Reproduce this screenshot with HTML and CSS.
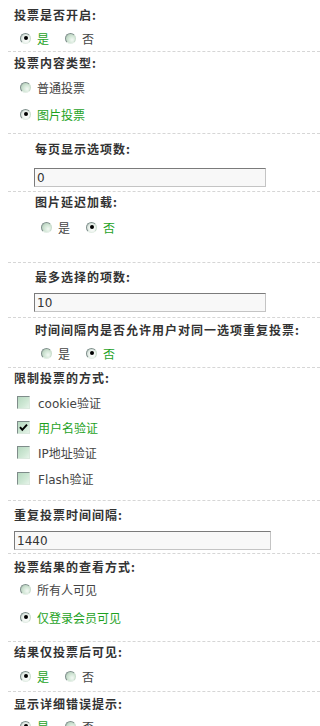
FILE: index.html
```html
<!DOCTYPE html>
<html lang="zh-CN">
<head>
<meta charset="utf-8">
<title>投票设置</title>
<link rel="stylesheet" href="styles.css">
</head>
<body>
<div class="form">

  <section class="sec s1">
    <div class="title">投票是否开启:</div>
    <div class="row inline g1">
      <label class="opt on"><span class="radio checked"></span>是</label>
      <label class="opt"><span class="radio"></span>否</label>
    </div>
  </section>

  <section class="sec s2">
    <div class="title">投票内容类型:</div>
    <div class="row g2"><label class="opt"><span class="radio"></span>普通投票</label></div>
    <div class="row g3"><label class="opt on"><span class="radio checked"></span>图片投票</label></div>
  </section>

  <section class="sec sub s3">
    <div class="title">每页显示选项数:</div>
    <input class="field short g9" type="text" value="0">
  </section>

  <section class="sec sub s4">
    <div class="title">图片延迟加载:</div>
    <div class="row inline g3">
      <label class="opt"><span class="radio"></span>是</label>
      <label class="opt on"><span class="radio checked"></span>否</label>
    </div>
  </section>

  <section class="sec sub s5">
    <div class="title">最多选择的项数:</div>
    <input class="field short g6" type="text" value="10">
  </section>

  <section class="sec sub s6">
    <div class="title">时间间隔内是否允许用户对同一选项重复投票:</div>
    <div class="row inline g1">
      <label class="opt"><span class="radio"></span>是</label>
      <label class="opt on"><span class="radio checked"></span>否</label>
    </div>
  </section>

  <section class="sec s7">
    <div class="title">限制投票的方式:</div>
    <div class="row g2"><label class="opt chk"><span class="cb"></span>cookie验证</label></div>
    <div class="row g1"><label class="opt chk on"><span class="cb"><svg class="tick" viewBox="0 0 11 11" width="11" height="11"><path d="M2 5.2 L4.3 7.8 L9 2.6" fill="none" stroke="#000" stroke-width="2"/></svg></span>用户名验证</label></div>
    <div class="row g1"><label class="opt chk"><span class="cb"></span>IP地址验证</label></div>
    <div class="row g2"><label class="opt chk"><span class="cb"></span>Flash验证</label></div>
  </section>

  <section class="sec s8">
    <div class="title">重复投票时间间隔:</div>
    <input class="field long g6" type="text" value="1440">
  </section>

  <section class="sec s9">
    <div class="title">投票结果的查看方式:</div>
    <div class="row"><label class="opt"><span class="radio"></span>所有人可见</label></div>
    <div class="row g4"><label class="opt on"><span class="radio checked"></span>仅登录会员可见</label></div>
  </section>

  <section class="sec s10">
    <div class="title">结果仅投票后可见:</div>
    <div class="row inline g2">
      <label class="opt on"><span class="radio checked"></span>是</label>
      <label class="opt"><span class="radio"></span>否</label>
    </div>
  </section>

  <section class="sec s11">
    <div class="title">显示详细错误提示:</div>
    <div class="row inline">
      <label class="opt on"><span class="radio checked"></span>是</label>
      <label class="opt"><span class="radio"></span>否</label>
    </div>
  </section>

</div>
</body>
</html>
```

FILE: styles.css
```css
html, body {
  margin: 0;
  padding: 0;
  background: #ffffff;
}

body {
  font-family: "DejaVu Sans", "Noto Sans CJK SC", sans-serif;
  font-size: 12px;
  color: #444444;
  overflow: hidden;
}

.form {
  margin-left: 8px;
  display: flex;
  flex-direction: column;
}

.sec {
  display: flex;
  flex-direction: column;
  align-items: flex-start;
  padding-left: 6px;
  border-top: 1px dashed #d6d6d6;
}

.sec.s1 { border-top: none; padding-top: 5px; padding-bottom: 1px; }
.sec.s2 { padding-top: 1px; padding-bottom: 7px; }
.sec.s3 { padding-top: 5px; padding-bottom: 4px; }
.sec.s4 { padding-top: 0; padding-bottom: 23px; }
.sec.s5 { padding-top: 4px; padding-bottom: 5px; }
.sec.s6 { padding-top: 2px; padding-bottom: 2px; }
.sec.s7 { padding-top: 0; padding-bottom: 10px; }
.sec.s8 { padding-top: 4px; padding-bottom: 3px; }
.sec.s9 { padding-top: 3px; padding-bottom: 12px; }
.sec.s10 { padding-top: 0; padding-bottom: 3px; }
.sec.s11 { padding-top: 2px; padding-bottom: 0; }

.sec.sub { padding-left: 27px; }

.title {
  height: 20px;
  line-height: 20px;
  font-family: "Noto Sans CJK SC", "DejaVu Sans", sans-serif;
  font-weight: bold;
  letter-spacing: 1px;
  color: #333333;
  white-space: nowrap;
}

.g1 { margin-top: 1px; }
.g2 { margin-top: 2px; }
.g3 { margin-top: 3px; }
.g4 { margin-top: 4px; }
.g6 { margin-top: 6px; }
.g9 { margin-top: 9px; }

.row {
  height: 24px;
  display: flex;
  align-items: center;
  padding-left: 6px;
}

.sub .row { padding-left: 6px; }

.opt {
  display: flex;
  align-items: center;
  height: 24px;
  color: #444444;
  white-space: nowrap;
}

.inline .opt { margin-right: 16px; }

.opt.on { color: #1ea21e; }

.radio {
  position: relative;
  width: 11px;
  height: 11px;
  box-sizing: border-box;
  border-radius: 50%;
  margin-right: 6px;
  flex: none;
  border: 1px solid;
  border-color: #7f8f8c #c9dccd #e4eee6 #7f8f8c;
  background: radial-gradient(circle at 68% 66%, #f3f9f4 0%, #d2e6d6 45%, #a9c3b0 100%);
}

.radio.checked {
  background: radial-gradient(circle at 62% 62%, #ffffff 0%, #eef4ef 45%, #b9c9c2 100%);
}

.radio.checked::after {
  content: "";
  position: absolute;
  left: 2.5px;
  top: 2.5px;
  width: 4px;
  height: 4px;
  border-radius: 50%;
  background: #000000;
}

.chk { margin-left: -3px; }

.cb {
  width: 13px;
  height: 13px;
  box-sizing: border-box;
  margin-right: 8px;
  flex: none;
  display: flex;
  align-items: center;
  justify-content: center;
  border: 1px solid;
  border-color: #7f8c8a #dbe9de #dbe9de #7f8c8a;
  background: linear-gradient(135deg, #b6d9c0 0%, #cfe8d5 60%, #e6f3e9 100%);
}

.tick { display: block; }

.field {
  display: block;
  height: 19px;
  box-sizing: border-box;
  margin-left: 0;
  margin-right: 0;
  margin-bottom: 0;
  padding: 0 0 0 2px;
  border: 1px solid;
  border-color: #7b7b7b #c4c4c4 #c4c4c4 #7b7b7b;
  background: #f8f8f8;
  font-family: "DejaVu Sans", sans-serif;
  font-size: 12px;
  color: #333333;
  outline: none;
}

.sub .field { margin-left: -1px; }

.field.short { width: 232px; }
.field.long { width: 257px; }
```
